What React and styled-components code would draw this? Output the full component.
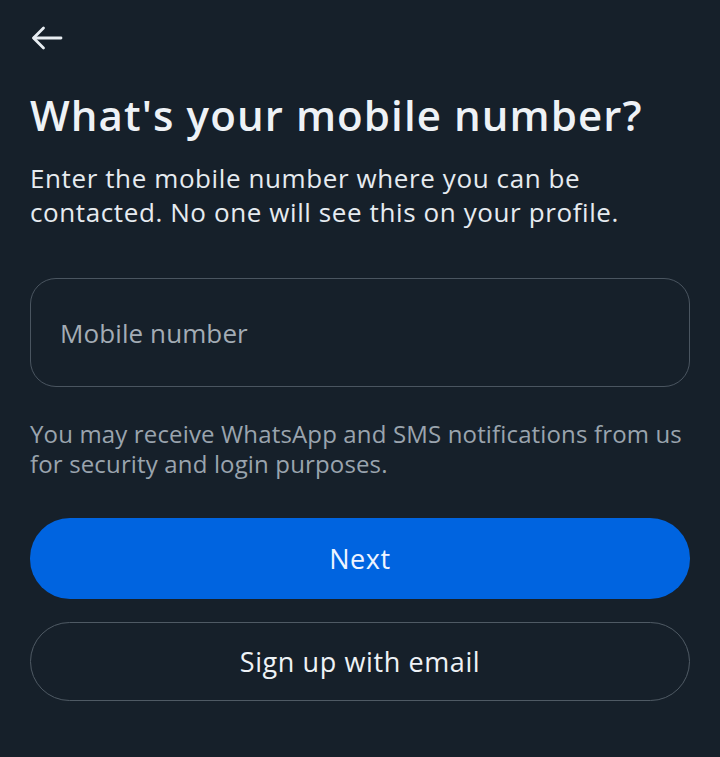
import React from 'react';
import styled, { createGlobalStyle } from 'styled-components';

const GlobalStyle = createGlobalStyle`
  html, body {
    margin: 0;
    padding: 0;
    background: #16202a;
  }
  body {
    font-family: "Open Sans", "Noto Sans", sans-serif;
    color: #e8edf2;
  }
`

const Screen = styled.div`
  box-sizing: border-box;
  width: 720px;
  height: 757px;
  padding: 21px 30px 0;
  display: flex;
  flex-direction: column;
  background: #16202a;
`

const BackButton = styled.button`
  width: 34px;
  height: 34px;
  padding: 0;
  margin-left: 1px;
  border: none;
  background: transparent;
  color: #e8edf2;
  display: flex;
  align-items: center;
  justify-content: flex-start;
`

const Title = styled.h1`
  margin: 34px 0 0;
  font-size: 42px;
  font-weight: 600;
  line-height: 52px;
  letter-spacing: 1.1px;
  color: #eef2f6;
`

const Subtitle = styled.p`
  margin: 20px 0 0;
  font-size: 26px;
  line-height: 34px;
  letter-spacing: 0.6px;
  color: #e6ebf0;
`

const Field = styled.div`
  box-sizing: border-box;
  margin-top: 49px;
  height: 109px;
  border: 1.5px solid #4a5560;
  border-radius: 26px;
  display: flex;
  align-items: center;
  padding: 0 27px;
`

const Input = styled.input`
  width: 100%;
  border: none;
  outline: none;
  background: transparent;
  font-family: inherit;
  font-size: 26px;
  letter-spacing: 0.1px;
  color: #e8edf2;
  &::placeholder {
    color: #a3acb5;
  }
`

const Note = styled.p`
  margin: 32px 0 0;
  font-size: 24px;
  line-height: 30px;
  letter-spacing: 0.15px;
  color: #9aa4ae;
`

const Button = styled.button`
  box-sizing: border-box;
  width: 100%;
  height: ${(p) => (p.primary ? '81px' : '79px')};
  margin-top: ${(p) => p.gap};
  border-radius: 40px;
  border: ${(p) => (p.primary ? 'none' : '1.5px solid #4f5a64')};
  background: ${(p) => (p.primary ? '#0064e0' : 'transparent')};
  color: ${(p) => (p.primary ? '#eef4ff' : '#eef2f6')};
  font-family: inherit;
  font-size: 27px;
  letter-spacing: 0.6px;
  font-weight: 400;
`

const App = () => {
  return (
    <Screen>
      <GlobalStyle />
      <BackButton aria-label="Back">
        <svg width="32" height="24" viewBox="0 0 32 24" fill="none" stroke="currentColor" strokeWidth="2.8" strokeLinecap="round" strokeLinejoin="round">
          <path d="M30 12H3" />
          <path d="M12.5 2L2.5 12l10 10" />
        </svg>
      </BackButton>
      <Title>What's your mobile number?</Title>
      <Subtitle>
        Enter the mobile number where you can be contacted. No one will see this on your profile.
      </Subtitle>
      <Field>
        <Input placeholder="Mobile number" />
      </Field>
      <Note>
        You may receive WhatsApp and SMS notifications from us for security and login purposes.
      </Note>
      <Button primary gap="39px">Next</Button>
      <Button gap="23px">Sign up with email</Button>
    </Screen>
  );
};

export default App;
